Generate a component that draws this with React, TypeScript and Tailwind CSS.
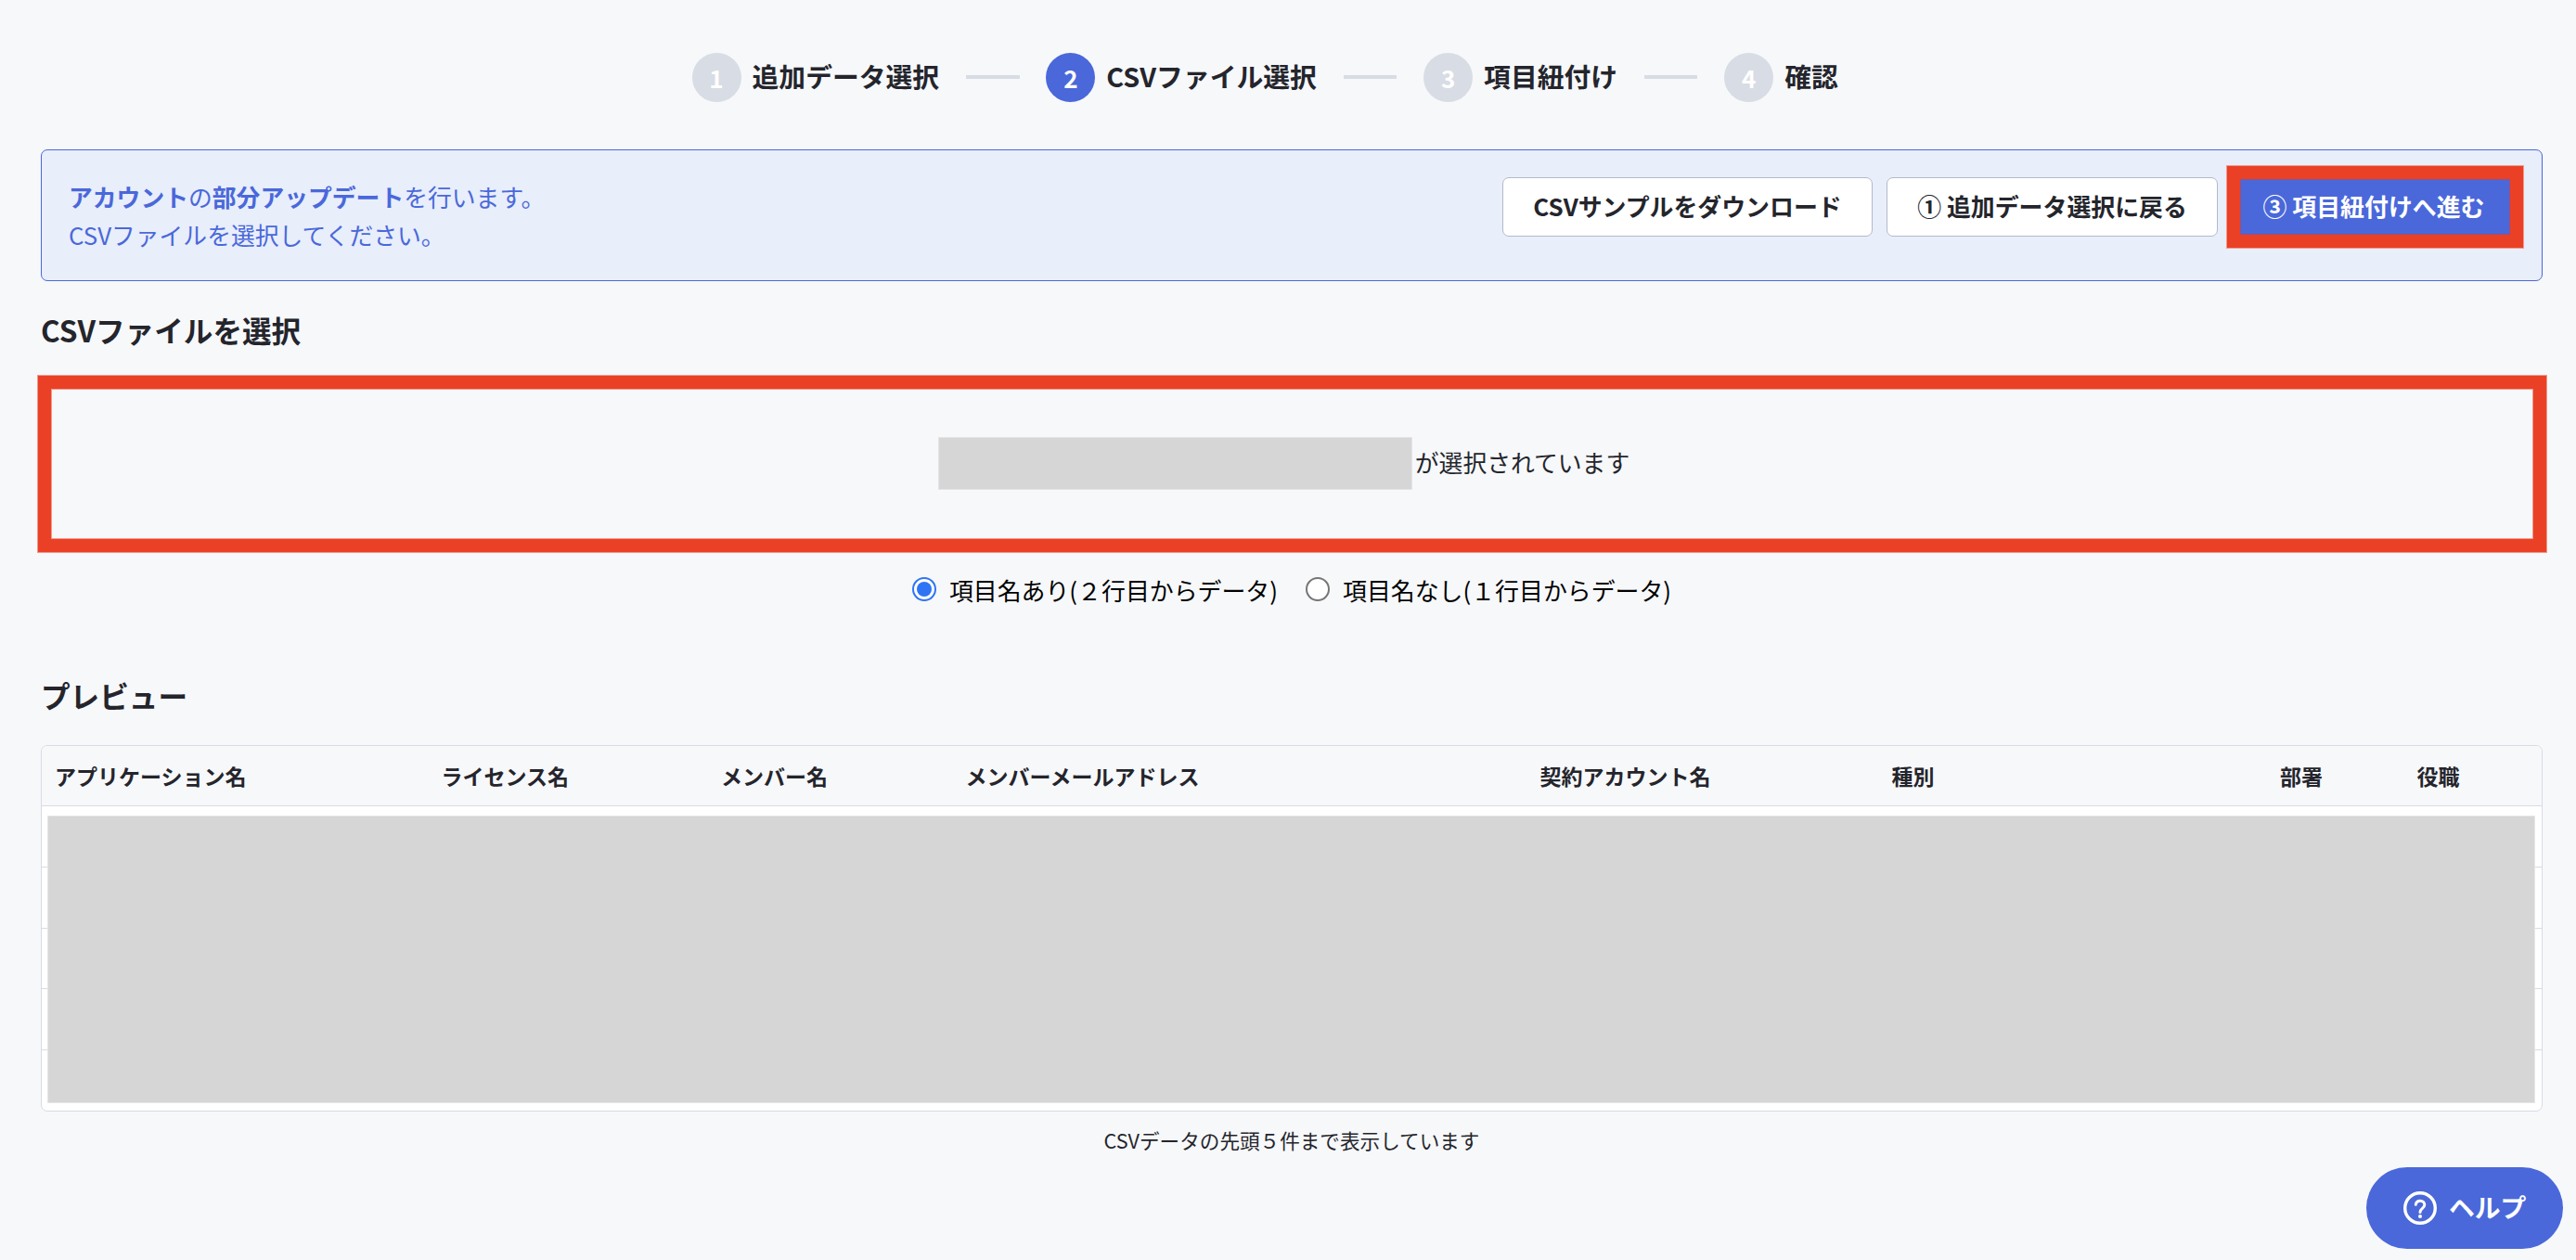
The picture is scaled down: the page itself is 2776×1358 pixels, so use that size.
import { clsx } from 'clsx';
import type { ReactNode } from 'react';

const steps = ['追加データ選択', 'CSVファイル選択', '項目紐付け', '確認'];
const currentStep = 2;

const columns = [
  'アプリケーション名',
  'ライセンス名',
  'メンバー名',
  'メンバーメールアドレス',
  '契約アカウント名',
  '種別',
  '部署',
  '役職',
];

const rowHeights = ['h-[66px]', 'h-[66px]', 'h-[65px]', 'h-[66px]', 'h-[66px]'];

function Stepper() {
  return (
    <ol className="flex h-[53px] items-center justify-center">
      {steps.map((label, index) => {
        const number = index + 1;
        return (
          <li key={label} className="flex items-center">
            <span
              className={clsx(
                'flex size-[53px] items-center justify-center rounded-full pb-px text-[26px] font-bold text-white',
                number === currentStep ? 'bg-[#4a68da]' : 'bg-[#d8dce5]'
              )}
            >
              {number}
            </span>
            <span className="ml-3 pb-[3px] text-[28.8px] font-bold">{label}</span>
            {number < steps.length ? (
              <span className="mx-[28.8px] -mt-0.5 h-1 w-[57.6px] bg-[#d8dce5]" />
            ) : (
              <span className="w-[57.6px]" />
            )}
          </li>
        );
      })}
    </ol>
  );
}

function OutlineButton({ children, className }: { children: ReactNode; className?: string }) {
  return (
    <button
      type="button"
      className={clsx(
        'flex h-16 items-center justify-center rounded-[7px] border border-[#b4b9c8] bg-white text-[25.9px] font-bold',
        className
      )}
    >
      {children}
    </button>
  );
}

function Notice() {
  return (
    <section className="flex h-[142px] items-start justify-between rounded-[7px] border border-[#4a68da] bg-[#e8eefa] py-[29px] pr-[28px] pl-[29px]">
      <p className="text-[25.8px] leading-[41px] text-[#4a68da]">
        <strong>アカウント</strong>の<strong>部分アップデート</strong>を行います。
        <br />
        CSVファイルを選択してください。
      </p>
      <div className="flex gap-[15px]">
        <OutlineButton className="w-[399px] pb-px">CSVサンプルをダウンロード</OutlineButton>
        <OutlineButton className="w-[357px] pb-px">① 追加データ選択に戻る</OutlineButton>
        <div className="relative">
          <button
            type="button"
            className="flex h-16 w-[306px] items-center justify-center rounded-[7px] bg-[#4a68da] pb-px text-[25.9px] font-bold text-white"
          >
            ③ 項目紐付けへ進む
          </button>
          <div className="pointer-events-none absolute -top-[13px] -left-[6px] h-[90px] w-[321px] border border-[#f09a8a]">
            <div className="h-full border-[14px] border-[#ea4026]">
              <div className="h-full border border-[#8b5390]" />
            </div>
          </div>
        </div>
      </div>
    </section>
  );
}

function SelectedFile() {
  return (
    <div className="-mr-[5px] -ml-1 h-48 border border-[#f09a8a]">
      <div className="h-full border-[14px] border-[#ea4026]">
        <div className="flex h-full items-center justify-center border border-[#f09a8a] pr-[18px] pb-[2px]">
          <span className="h-[57px] w-[511px] border border-[#e3e4e5] bg-[#d6d6d6]" />
          <span className="ml-[3px] pb-[2px] text-[25.8px]">が選択されています</span>
        </div>
      </div>
    </div>
  );
}

function RadioOption({ label, checked }: { label: string; checked?: boolean }) {
  return (
    <label className="flex items-center text-[25.9px] text-black">
      <span
        className={clsx(
          '-mt-0.5 flex size-[26px] items-center justify-center rounded-full border-2 bg-white',
          checked ? 'border-[#2f74f5]' : 'border-[#767676]'
        )}
      >
        {checked ? <span className="size-4 rounded-full bg-[#2f74f5]" /> : null}
      </span>
      <span className="ml-[14px]">{label}</span>
    </label>
  );
}

function PreviewTable() {
  return (
    <div className="relative h-[395px] overflow-hidden rounded-[7px] border border-[#d8dbe5] bg-white">
      <div className="grid h-[65px] grid-cols-[416.5px_301.5px_263.5px_619px_379px_418.5px_147.5px_1fr] items-center border-b border-[#d8dbe5] bg-[#f7f8fa] pl-[14px] text-[23px] font-bold">
        {columns.map((column) => (
          <span key={column}>{column}</span>
        ))}
      </div>
      {rowHeights.map((height, index) => (
        <div
          key={index}
          className={clsx(height, 'border-b border-[#d8dbe5] last-of-type:border-b-0')}
        />
      ))}
      <span className="absolute top-[75px] right-[7px] bottom-[8px] left-[6px] border border-[#e6e6e6] bg-[#d6d6d6]" />
    </div>
  );
}

function HelpButton() {
  return (
    <button
      type="button"
      className="absolute right-[14px] bottom-3 flex h-[88px] w-[212px] items-center rounded-full bg-[#4a68da] pl-10 text-[27.8px] font-bold text-white"
    >
      <svg viewBox="0 0 36 36" fill="none" stroke="currentColor" className="size-9">
        <circle cx="18" cy="18" r="16.3" strokeWidth="3.4" />
        <path
          d="M13.3 14.2c.5-2.4 2.3-3.9 4.7-3.9 2.8 0 4.8 1.7 4.8 4.3 0 3.7-4.8 3.9-4.8 7.9"
          strokeWidth="3"
          strokeLinecap="round"
        />
        <circle cx="18" cy="27" r="2" fill="currentColor" stroke="none" />
      </svg>
      <span className="ml-[13px] pb-[2px]">ヘルプ</span>
    </button>
  );
}

export default function App() {
  return (
    <main className="relative h-[1358px] w-[2776px] overflow-hidden bg-[#f7f8fa] pt-[57px] pr-9 pl-11 font-['Noto_Sans_CJK_JP',sans-serif] whitespace-nowrap text-[#24252c]">
      <Stepper />
      <div className="mt-[51px]">
        <Notice />
      </div>
      <h2 className="flex h-[101px] items-center pt-[5px] text-[31.6px] font-bold">
        CSVファイルを選択
      </h2>
      <SelectedFile />
      <div className="flex h-20 items-center justify-center gap-[30px]">
        <RadioOption label="項目名あり(２行目からデータ)" checked />
        <RadioOption label="項目名なし(１行目からデータ)" />
      </div>
      <h2 className="flex h-[127px] items-center pt-[21px] text-[31.6px] font-bold">プレビュー</h2>
      <PreviewTable />
      <p className="mt-[15px] text-center text-[21.6px] leading-[32px]">
        CSVデータの先頭５件まで表示しています
      </p>
      <HelpButton />
    </main>
  );
}
